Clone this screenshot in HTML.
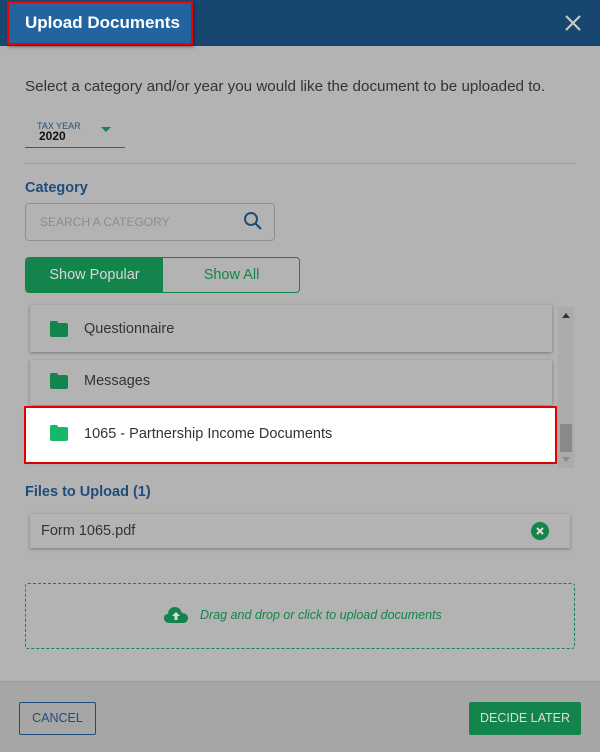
<!DOCTYPE html>
<html><head><style>
*{box-sizing:border-box;margin:0;padding:0}
body{width:600px;height:752px;background:#b3b3b3;font-family:"Liberation Sans",sans-serif;position:relative;overflow:hidden;color:#333}
.abs{position:absolute}
.hdr{left:0;top:0;width:600px;height:46px;background:#17466f}
.title{left:7px;top:1px;width:186px;height:44px;background:#2264a0;border:2px solid #e00;color:#fff;font-weight:bold;font-size:17px;line-height:40px;padding-left:16px;box-shadow:1px 2px 3px rgba(0,0,0,.4)}
.card{background:#b3b3b3;box-shadow:0 1px 3px rgba(0,0,0,.35)}
.folder{width:18px;height:14px;border-radius:2px;background:#13844c}
.folder:before{content:"";position:absolute;left:0;top:-2px;width:8px;height:4px;background:inherit;border-radius:2px 2px 0 0}
.item{font-size:14.5px;color:#333}
</style></head><body>
<div class="abs hdr"></div>
<div class="abs title">Upload Documents</div>
<svg class="abs" style="left:565px;top:15px" width="16" height="16"><path d="M1 1L15 15M15 1L1 15" stroke="#ccc" stroke-width="2"/></svg>
<div class="abs" style="left:25px;top:78px;font-size:15.2px;color:#333">Select a category and/or year you would like the document to be uploaded to.</div>
<div class="abs" style="left:37px;top:121px;font-size:9px;color:#2a4f72">TAX YEAR</div>
<div class="abs" style="left:39px;top:129px;font-size:12px;font-weight:bold;color:#111">2020</div>
<svg class="abs" style="left:101px;top:127px" width="10" height="6"><path d="M0 0H10L5 5Z" fill="#13844c"/></svg>
<div class="abs" style="left:25px;top:147px;width:100px;height:1px;background:#555"></div>
<div class="abs" style="left:25px;top:163px;width:550px;height:1px;background:#9a9a9a"></div>
<div class="abs" style="left:25px;top:180px;font-size:14.5px;font-weight:bold;color:#1f4d7a">Category</div>
<div class="abs" style="left:25px;top:203px;width:250px;height:38px;border:1px solid #8f8f8f;border-radius:4px"></div>
<div class="abs" style="left:40px;top:215px;font-size:12px;color:#8c8c8c">SEARCH A CATEGORY</div>
<svg class="abs" style="left:243px;top:211px" width="20" height="20"><circle cx="8" cy="8" r="6" fill="none" stroke="#1f4d7a" stroke-width="2"/><path d="M12.5 12.5L18 18" stroke="#1f4d7a" stroke-width="2.2"/></svg>
<div class="abs" style="left:25px;top:257px;width:275px;height:36px;border:1px solid #13844c;border-radius:4px;overflow:hidden">
<div class="abs" style="left:0;top:0;width:137px;height:34px;background:#13844c;color:#d8d8d8;font-size:14.5px;text-align:center;line-height:34px">Show Popular</div>
<div class="abs" style="left:137px;top:0;width:137px;height:34px;color:#13844c;font-size:14.5px;text-align:center;line-height:34px">Show All</div></div>
<div class="abs card" style="left:30px;top:305px;width:522px;height:47px"></div>
<div class="abs folder" style="left:50px;top:323px"></div>
<div class="abs item" style="left:84px;top:321px">Questionnaire</div>
<div class="abs card" style="left:30px;top:360px;width:522px;height:45px"></div>
<div class="abs folder" style="left:50px;top:375px"></div>
<div class="abs item" style="left:84px;top:373px">Messages</div>
<div class="abs" style="left:558px;top:307px;width:16px;height:161px;background:#ababab"></div>
<svg class="abs" style="left:562px;top:313px" width="8" height="6"><path d="M0 5H8L4 0Z" fill="#333"/></svg>
<div class="abs" style="left:560px;top:424px;width:12px;height:28px;background:#8a8a8a"></div>
<svg class="abs" style="left:562px;top:457px" width="8" height="6"><path d="M0 0H8L4 5Z" fill="#8a8a8a"/></svg>
<div class="abs" style="left:24px;top:406px;width:533px;height:58px;border:2px solid #e00"></div>
<div class="abs" style="left:26px;top:408px;width:529px;height:54px;background:#fff;box-shadow:0 1px 3px rgba(0,0,0,.2)"></div>
<div class="abs folder" style="left:50px;top:427px;background:#18b86a"></div>
<div class="abs item" style="left:84px;top:426px">1065 - Partnership Income Documents</div>
<div class="abs" style="left:25px;top:484px;font-size:14.5px;font-weight:bold;color:#1f4d7a">Files to Upload (1)</div>
<div class="abs card" style="left:30px;top:514px;width:540px;height:34px"></div>
<div class="abs item" style="left:41px;top:523px">Form 1065.pdf</div>
<svg class="abs" style="left:530px;top:521px" width="20" height="20"><circle cx="10" cy="10" r="9" fill="#13844c"/><path d="M7 7L13 13M13 7L7 13" stroke="#ddd" stroke-width="2"/></svg>
<div class="abs" style="left:25px;top:583px;width:550px;height:66px;border:1px dashed #13844c;border-radius:3px"></div>
<svg class="abs" style="left:164px;top:606px" width="24" height="18"><path d="M6 17C2 17 0 15 0 12C0 9 2 8 4 8C4 4 7 1 11 1C15 1 17 4 18 7C21 7 24 9 24 12C24 15 22 17 19 17Z" fill="#13844c"/><path d="M12 6L8 10H10.5V14H13.5V10H16Z" fill="#ddd"/></svg>
<div class="abs" style="left:200px;top:608px;font-size:12.5px;font-style:italic;color:#13844c">Drag and drop or click to upload documents</div>
<div class="abs" style="left:0;top:681px;width:600px;height:71px;background:#a6a6a6;border-top:1px solid #999"></div>
<div class="abs" style="left:19px;top:702px;width:77px;height:33px;border:1px solid #1f4d7a;border-radius:2px;color:#1f4d7a;font-size:12.5px;text-align:center;line-height:31px">CANCEL</div>
<div class="abs" style="left:469px;top:702px;width:112px;height:33px;background:#13844c;border-radius:2px;color:#ddd;font-size:12.5px;text-align:center;line-height:33px">DECIDE LATER</div>
</body></html>
